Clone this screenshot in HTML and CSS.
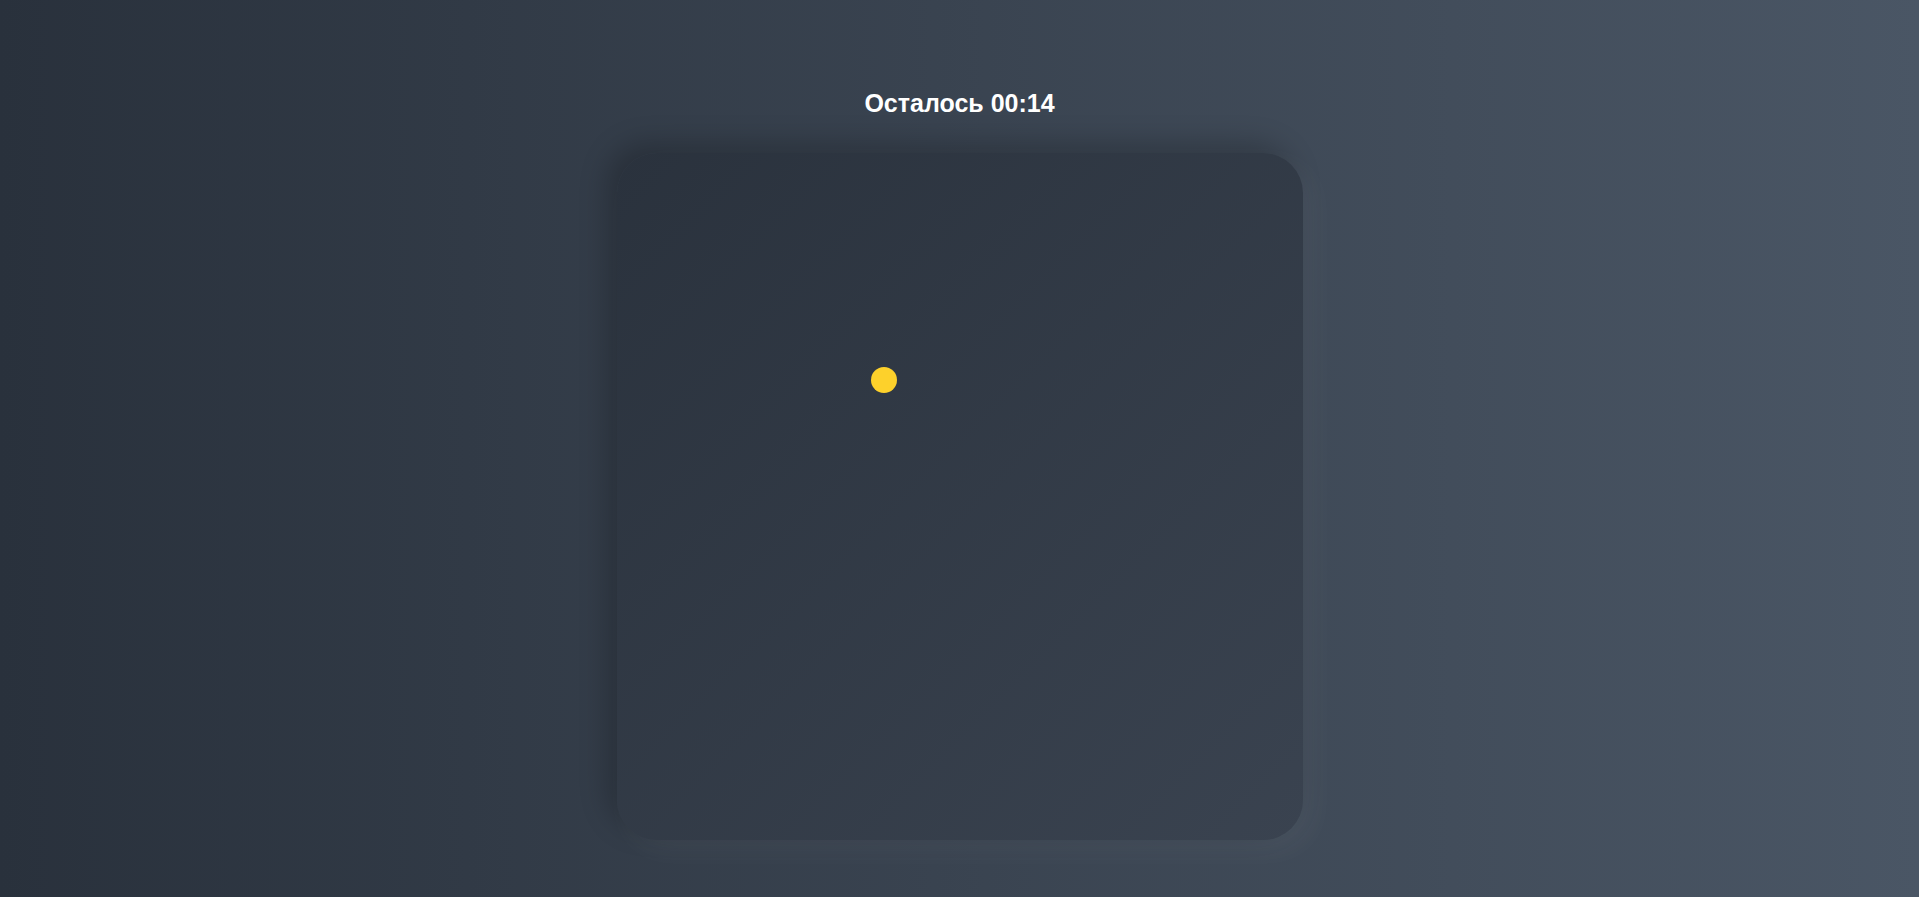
FILE: index.html
```html
<!DOCTYPE html>
<html lang="ru">
<head>
<meta charset="utf-8">
<title>Игра</title>
<link rel="stylesheet" href="styles.css">
</head>
<body>
<main class="page">
  <h1 class="timer">Осталось 00:14</h1>
  <div class="field">
    <div class="dot" style="left:254px; top:214px;"></div>
  </div>
</main>
</body>
</html>
```
FILE: styles.css
```css
html, body {
  margin: 0;
  padding: 0;
  height: 100%;
}
body {
  background: linear-gradient(90deg, #29313c 0%, #4a5665 100%);
  font-family: "Liberation Sans", Arial, sans-serif;
  overflow: hidden;
}
.page {
  display: flex;
  flex-direction: column;
  align-items: center;
  padding-top: 89px;
}
.timer {
  margin: 0;
  color: #ffffff;
  font-size: 25px;
  font-weight: 700;
  line-height: 28px;
}
.field {
  position: relative;
  margin-top: 36px;
  width: 686px;
  height: 687px;
  border-radius: 40px;
  background: linear-gradient(135deg, #2a323d 0%, #3a4350 100%);
  box-shadow: -10px -10px 28px rgba(0, 0, 0, 0.22), 10px 10px 28px rgba(255, 255, 255, 0.05);
}
.dot {
  position: absolute;
  width: 26px;
  height: 26px;
  border-radius: 50%;
  background: #fdd12b;
}
```
